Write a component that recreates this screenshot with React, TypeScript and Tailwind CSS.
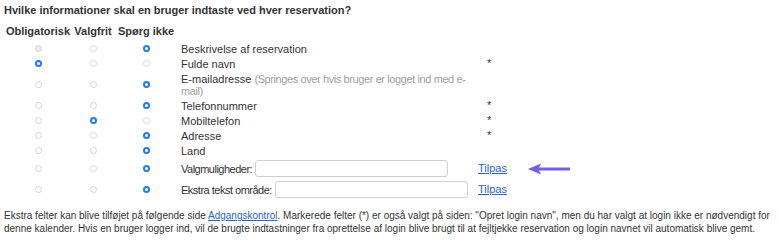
import React from 'react';

type Row = {
  label: React.ReactNode;
  pick: 0 | 1 | 2;
  star?: boolean;
  input?: boolean;
  two?: boolean;
};

const rows: Row[] = [
  { label: 'Beskrivelse af reservation', pick: 2 },
  { label: 'Fulde navn', pick: 0, star: true },
  {
    label: (
      <>
        E-mailadresse{' '}
        <span className="text-[#a0a0a0] tracking-[-0.4px]">
          (Springes over hvis bruger er logget ind med e-
          <br />
          mail)
        </span>
      </>
    ),
    pick: 2,
    two: true,
  },
  { label: 'Telefonnummer', pick: 2, star: true },
  { label: 'Mobiltelefon', pick: 1, star: true },
  { label: 'Adresse', pick: 2, star: true },
  { label: 'Land', pick: 2 },
  { label: 'Valgmuligheder:', pick: 2, input: true },
  { label: 'Ekstra tekst område:', pick: 2, input: true },
];

function Radio({ on, dim }: { on: boolean; dim?: boolean }) {
  if (on) {
    return (
      <span className="flex h-[7px] w-[7px] items-center justify-center rounded-full bg-[#1f7cf0]">
        <span className="h-[3px] w-[3px] rounded-full bg-white" />
      </span>
    );
  }
  return <span className={`h-[7px] w-[7px] rounded-full border border-[#d4d4d4] ${dim ? 'bg-[#ececec]' : 'bg-white'}`} />;
}

function Arrow() {
  return (
    <svg width="42" height="12" viewBox="0 0 42 12" className="ml-[21px]">
      <path d="M0 6 L13 0.5 L11 4.5 L42 4.5 L42 7.5 L11 7.5 L13 11.5 Z" fill="#7160e8" />
    </svg>
  );
}

export default function App() {
  return (
    <div className="w-[778px] h-[242px] bg-white px-[4px] pt-[4px] text-[11px] leading-[13px] text-[#333] font-['Liberation_Sans',Arial,sans-serif]">
      <div className="font-bold h-[14px]">Hvilke informationer skal en bruger indtaste ved hver reservation?</div>
      <div className="flex mt-[7px] h-[14px] font-bold">
        <div className="w-[68px] text-center">Obligatorisk</div>
        <div className="w-[42px] text-center">Valgfrit</div>
        <div className="w-[64px] text-center">Spørg ikke</div>
      </div>
      <div className="mt-[2px]">
        {rows.map((r, i) => (
          <div
            key={i}
            className={`flex items-center ${r.input ? 'h-[21px]' : r.two ? 'h-[27px]' : 'h-[15px]'}`}
          >
            <div className="w-[68px] shrink-0 flex justify-center">
              <Radio on={r.pick === 0} dim={i === 0} />
            </div>
            <div className="w-[42px] shrink-0 flex justify-center">
              <Radio on={r.pick === 1} />
            </div>
            <div className="w-[64px] shrink-0 flex justify-center">
              <Radio on={r.pick === 2} />
            </div>
            <div className="w-[293px] shrink-0 pl-[3px] leading-[12px] flex items-center">
              <span
                className={
                  r.input ? 'whitespace-nowrap shrink-0 tracking-[-0.5px]' : 'whitespace-nowrap shrink-0'
                }
              >
                {r.label}
              </span>
              {r.input && (
                <span className="ml-[3px] h-[17px] w-[193px] shrink-0 rounded-[3px] border border-[#cfcfcf] bg-white" />
              )}
            </div>
            <div className="flex items-center">
              {r.star && <span className="pl-[16px]">*</span>}
              {r.input && (
                <a href="#" className="pl-[7px] text-[#2a5fd0] underline">
                  Tilpas
                </a>
              )}
              {i === 7 && <Arrow />}
            </div>
          </div>
        ))}
      </div>
      <p className="mt-[9px] text-[10px] leading-[13px]">
        Ekstra felter kan blive tilføjet på følgende side{' '}
        <a href="#" className="text-[#2a5fd0] underline">
          Adgangskontrol
        </a>
        . Markerede felter (*) er også valgt på siden: "Opret login navn", men du har valgt at login ikke er nødvendigt for
        <br />
        denne kalender. Hvis en bruger logger ind, vil de brugte indtastninger fra oprettelse af login blive brugt til at fejltjekke reservation og login navnet vil automatisk blive gemt.
      </p>
    </div>
  );
}
